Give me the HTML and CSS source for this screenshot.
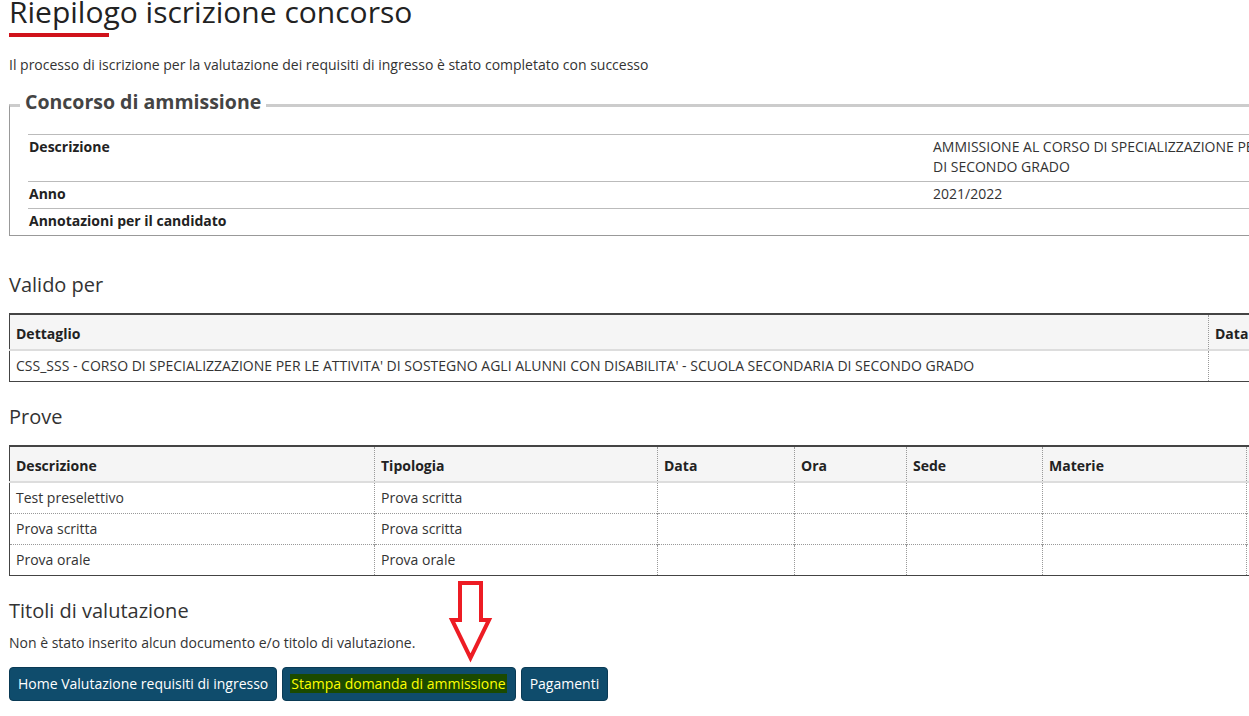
FILE: index.html
```html
<!DOCTYPE html>
<html lang="it">
<head>
    <meta charset="UTF-8">
    <meta name="viewport" content="width=device-width, initial-scale=1.0">
    <title>Riepilogo iscrizione concorso</title>
    <link rel="stylesheet" href="styles.css">
</head>
<body>
    <div class="page">
        <h1 class="page-title">Riepilogo iscrizione concorso</h1>
        <p class="intro">Il processo di iscrizione per la valutazione dei requisiti di ingresso è stato completato con successo</p>

        <fieldset class="summary">
            <legend>Concorso di ammissione</legend>
            <table class="detail-table">
                <colgroup>
                    <col class="detail-label">
                    <col class="detail-value">
                </colgroup>
                <tr>
                    <th>Descrizione</th>
                    <td>AMMISSIONE AL CORSO DI SPECIALIZZAZIONE PER LE ATTIVITA' DI SOSTEGNO AGLI ALUNNI CON DISABILITA' - SCUOLA SECONDARIA DI&nbsp;SECONDO GRADO</td>
                </tr>
                <tr>
                    <th>Anno</th>
                    <td>2021/2022</td>
                </tr>
                <tr>
                    <th>Annotazioni per il candidato</th>
                    <td></td>
                </tr>
            </table>
        </fieldset>

        <h2 class="section-title">Valido per</h2>
        <table class="grid-table valid-table">
            <colgroup>
                <col style="width: 1199px">
                <col style="width: 160px">
            </colgroup>
            <thead>
                <tr>
                    <th>Dettaglio</th>
                    <th>Data</th>
                </tr>
            </thead>
            <tbody>
                <tr>
                    <td>CSS_SSS - CORSO DI SPECIALIZZAZIONE PER LE ATTIVITA' DI SOSTEGNO AGLI ALUNNI CON DISABILITA' - SCUOLA SECONDARIA DI SECONDO GRADO</td>
                    <td></td>
                </tr>
            </tbody>
        </table>

        <h2 class="section-title">Prove</h2>
        <table class="grid-table">
            <colgroup>
                <col style="width: 365px">
                <col style="width: 283px">
                <col style="width: 137px">
                <col style="width: 112px">
                <col style="width: 136px">
                <col style="width: 204px">
                <col style="width: 160px">
            </colgroup>
            <thead>
                <tr>
                    <th>Descrizione</th>
                    <th>Tipologia</th>
                    <th>Data</th>
                    <th>Ora</th>
                    <th>Sede</th>
                    <th>Materie</th>
                    <th>Esito</th>
                </tr>
            </thead>
            <tbody>
                <tr>
                    <td>Test preselettivo</td>
                    <td>Prova scritta</td>
                    <td></td><td></td><td></td><td></td><td></td>
                </tr>
                <tr>
                    <td>Prova scritta</td>
                    <td>Prova scritta</td>
                    <td></td><td></td><td></td><td></td><td></td>
                </tr>
                <tr>
                    <td>Prova orale</td>
                    <td>Prova orale</td>
                    <td></td><td></td><td></td><td></td><td></td>
                </tr>
            </tbody>
        </table>

        <h2 class="section-title">Titoli di valutazione</h2>
        <p class="note">Non è stato inserito alcun documento e/o titolo di valutazione.</p>

        <div class="actions">
            <a href="#" class="btn">Home Valutazione requisiti di ingresso</a>
            <a href="#" class="btn btn-print"><span class="mark">Stampa domanda di ammissione</span></a>
            <a href="#" class="btn">Pagamenti</a>
        </div>
    </div>

    <!-- red arrow drawn over the page -->
    <svg class="arrow" width="46" height="86" viewBox="0 0 46 86">
        <polygon points="12,4 33,4 33,41 41,41 22.5,79 4,41 12,41" fill="none" stroke="#ed1c24" stroke-width="4" stroke-linejoin="miter"/>
    </svg>
</body>
</html>
```

FILE: styles.css
```css
* {
    box-sizing: border-box;
}

html, body {
    overflow: hidden;
}

body {
    margin: 0;
    background: #fff;
    color: #333;
    font-family: "Open Sans", "Liberation Sans", sans-serif;
    font-size: 14px;
    line-height: 20px;
    position: relative;
}

.page {
    width: 1900px;
    padding-left: 9px;
}

.page-title {
    margin: -3px 0 0;
    font-size: 30px;
    line-height: 30px;
    font-weight: 400;
    color: #222;
}

.page-title::after {
    content: '';
    display: block;
    width: 100px;
    height: 4px;
    margin-top: 6px;
    background: #d0121b;
}

.intro {
    margin: 18px 0 0;
}

/* Concorso box */
.summary {
    margin: 14px 0 35px;
    padding: 0 0 0 10px;
    border: 1px solid #999;
    border-top: 3px solid #ccc;
    min-width: 0;
}

.summary legend {
    padding: 0 5px 7px;
    font-size: 19.5px;
    line-height: 26px;
    font-weight: 700;
    color: #444;
}

.detail-table {
    margin: 12px 0 0 8px;
    border-collapse: collapse;
    table-layout: fixed;
    width: 1824px;
}

.detail-label {
    width: 904px;
}

.detail-table th,
.detail-table td {
    padding: 2px 0 4px 1px;
    border-top: 1px solid #bbb;
    text-align: left;
    vertical-align: top;
}

.detail-table th {
    font-weight: 700;
    color: #222;
}

.section-title {
    margin: 21px 0 14px;
    font-size: 20px;
    line-height: 28px;
    font-weight: 400;
    color: #333;
}

/* Data tables */
.grid-table {
    border-collapse: collapse;
    table-layout: fixed;
    border: 1px solid #444;
    border-top: 2px solid #444;
}

.grid-table th {
    padding: 9px 6px 5px;
    background: #f5f5f5;
    border-bottom: 2px solid #ddd;
    text-align: left;
    font-weight: 700;
    color: #222;
    white-space: nowrap;
}

.grid-table td {
    padding: 5px 6px;
    height: 30px;
    white-space: nowrap;
}

.grid-table tbody tr + tr td {
    border-top: 1px dotted #999;
}

.grid-table th + th,
.grid-table td + td {
    border-left: 1px dotted #999;
}

.note {
    margin: -6px 0 14px;
}

/* Buttons */
.actions {
    display: flex;
    gap: 5px;
}

.btn {
    display: inline-block;
    height: 34px;
    padding: 0 8px;
    line-height: 32px;
    background: #0f4c6c;
    border: 1px solid #0a3a55;
    border-radius: 4px;
    color: #fff;
    text-decoration: none;
}

.btn-print {
    padding: 0 8px 0 7px;
}

.mark {
    padding: 0 1px;
    background: #1b4a00;
    color: #ffff00;
}

.arrow {
    position: absolute;
    left: 448px;
    top: 579px;
}
```
